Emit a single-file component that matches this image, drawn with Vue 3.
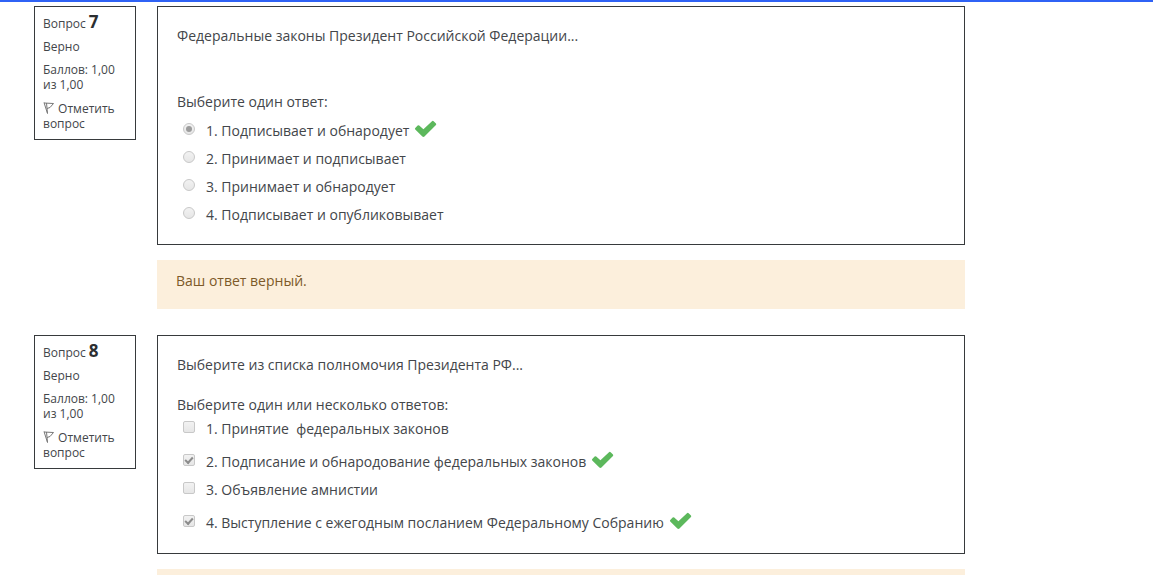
<script setup>
const questions = [
  {
    id: 7,
    type: 'radio',
    text: 'Федеральные законы Президент Российской Федерации...',
    prompt: 'Выберите один ответ:',
    options: [
      { text: '1. Подписывает и обнародует', checked: true },
      { text: '2. Принимает и подписывает', checked: false },
      { text: '3. Принимает и обнародует', checked: false },
      { text: '4. Подписывает и опубликовывает', checked: false },
    ],
    feedback: 'Ваш ответ верный.',
  },
  {
    id: 8,
    type: 'checkbox',
    text: 'Выберите из списка полномочия Президента РФ...',
    prompt: 'Выберите один или несколько ответов:',
    options: [
      { text: '1. Принятие\u00a0 федеральных законов', checked: false },
      { text: '2. Подписание и обнародование федеральных законов', checked: true },
      { text: '3. Объявление амнистии', checked: false },
      { text: '4. Выступление с ежегодным посланием Федеральному Собранию', checked: true },
    ],
    feedback: '',
  },
]
</script>

<template>
  <main class="page">
    <section v-for="q in questions" :key="q.id" class="question" :class="q.type">
      <aside class="info">
        <h3 class="number">Вопрос <strong>{{ q.id }}</strong></h3>
        <p>Верно</p>
        <p>Баллов: 1,00 из 1,00</p>
        <button type="button" class="flag">
          <svg viewBox="0 0 12 14" aria-hidden="true">
            <path d="M1 1.500 4.500 12.500M3.500 2 4.500 12.500M1 2 10.500 2.500 7 6.500 4 7.500" />
          </svg>
          Отметить вопрос
        </button>
      </aside>
      <div class="content">
        <div class="formulation">
          <p class="text">{{ q.text }}</p>
          <fieldset class="answers">
            <legend>{{ q.prompt }}</legend>
            <div v-for="(o, i) in q.options" :key="i" class="row" :class="{ correct: o.checked }">
              <input :id="`q${q.id}-${i}`" :type="q.type" :name="`q${q.id}`" :checked="o.checked" disabled />
              <label :for="`q${q.id}-${i}`">{{ o.text }}</label>
              <svg v-if="o.checked" class="tick" viewBox="0 0 22 17" aria-hidden="true">
                <path d="M1.200 7.500 3.500 5.200Q4.300 4.600 5 5.200L9 8.800 17.200 1Q18 .3 18.800 1L21 3.200Q21.600 4 21 4.700L10 15.700Q9 16.500 8 15.700L1.200 9Q.5 8.200 1.200 7.500Z" />
              </svg>
            </div>
          </fieldset>
        </div>
        <div class="feedback">{{ q.feedback }}</div>
      </div>
    </section>
  </main>
</template>

<style>
body {
  background: #fff;
  overflow: hidden;
}
</style>

<style scoped>
.page {
  border-top: 2px solid #2f62f5;
  padding: 4px 188px 0 34px;
  font: 14px/20px "Open Sans", "Noto Sans", sans-serif;
  color: #43464a;
}
.question {
  display: flex;
  align-items: flex-start;
  gap: 21px;
  margin-bottom: 26px;
}
.info {
  box-sizing: border-box;
  flex: 0 0 102px;
  padding: 5px 8px 8px;
  border: 1px solid #373a3c;
  font-size: 12px;
  line-height: 15px;
}
.info p {
  margin: 0 0 8px;
}
.number {
  margin: 0 0 5px;
  font-size: 12px;
  font-weight: 400;
  line-height: 20px;
}
.number strong {
  font-size: 17px;
  font-weight: 700;
  color: #2c2f31;
}
.flag {
  margin-top: 1px;
  padding: 0;
  border: 0;
  background: none;
  color: inherit;
  font: inherit;
  text-align: left;
}
.flag svg {
  width: 12px;
  height: 14px;
  vertical-align: -2px;
  fill: none;
  stroke: #777;
  stroke-width: 1;
}
.content {
  flex: 1;
  min-width: 0;
}
.formulation {
  padding: 19px 19px 15px;
  border: 1px solid #373a3c;
}
.text {
  margin: 0 0 20px;
}
.radio .text {
  margin-bottom: 46px;
}
.answers {
  margin: 0;
  padding: 0;
  border: 0;
  min-width: 0;
}
legend {
  padding: 0;
}
.radio legend {
  padding-bottom: 5px;
}
.checkbox .answers {
  padding-bottom: 1px;
}
.row {
  display: flex;
  align-items: center;
  height: 28px;
}
.checkbox .correct {
  padding-top: 5px;
}
.row input {
  appearance: none;
  box-sizing: border-box;
  display: grid;
  place-items: center;
  flex: none;
  width: 12px;
  height: 12px;
  margin: 0 11px 4px 6px;
  border: 1px solid #c8c8c8;
  border-radius: 2px;
  background: linear-gradient(#f2f2f2, #e6e6e6);
}
.row input[type="radio"] {
  border-radius: 50%;
}
.row input[type="radio"]:checked::before {
  content: "";
  width: 6px;
  height: 6px;
  border-radius: 50%;
  background: #9c9c9c;
}
.row input[type="checkbox"]:checked::before {
  content: "";
  width: 6px;
  height: 3px;
  margin-bottom: 2px;
  border: solid #8c8c8c;
  border-width: 0 0 2px 2px;
  transform: rotate(-48deg);
}
.tick {
  width: 23px;
  height: 18px;
  margin: 0 0 5px 5px;
  fill: #5cb85c;
}
.feedback {
  min-height: 20px;
  margin-top: 15px;
  padding: 11px 19px 18px;
  background: #fcefdc;
  color: #7d5a29;
}
</style>
